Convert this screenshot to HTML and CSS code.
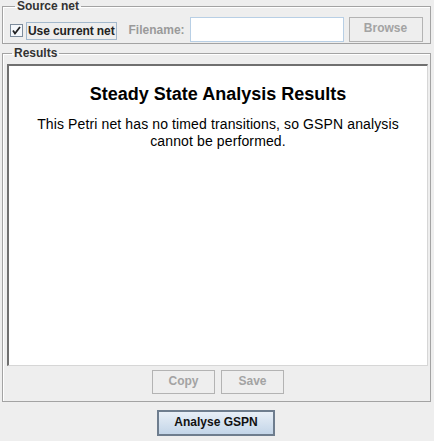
FILE: index.html
```html
<!DOCTYPE html>
<html>
<head>
<meta charset="utf-8">
<link rel="stylesheet" href="styles.css">
</head>
<body>
<fieldset class="group source">
  <legend class="group-title">Source net</legend>
  <div class="source-row">
    <span class="check">
      <svg width="13" height="13" viewBox="0 0 13 13">
        <rect x="0.5" y="0.5" width="12" height="12" fill="#f4f7fb" stroke="#7d8c9c"/>
        <path d="M3 6.5 L5 9.5 L10 3" fill="none" stroke="#222" stroke-width="1.8"/>
      </svg>
    </span>
    <span class="check-label">Use current net</span>
    <span class="field-label">Filename:</span>
    <span class="textfield"></span>
    <span class="btn btn-disabled browse">Browse</span>
  </div>
</fieldset>
<fieldset class="group results">
  <legend class="group-title">Results</legend>
  <div class="pane">
    <h1 class="pane-title">Steady State Analysis Results</h1>
    <p class="pane-text">This Petri net has no timed transitions, so GSPN analysis<br>cannot be performed.</p>
  </div>
  <div class="pane-actions">
    <span class="btn btn-disabled copy">Copy</span>
    <span class="btn btn-disabled save">Save</span>
  </div>
</fieldset>
<div class="footer">
  <span class="btn btn-primary">Analyse GSPN</span>
</div>
</body>
</html>
```

FILE: styles.css
```css
html, body {
  margin: 0;
  padding: 0;
}
body {
  width: 434px;
  height: 441px;
  background: #eeeeee;
  font-family: "Liberation Sans", Arial, sans-serif;
  overflow: hidden;
}
.group {
  margin: 0 3px 0 2px;
  border: 1px solid #a3a3a3;
  box-shadow: inset 1px 1px 0 #ffffff;
  min-width: 0;
}
.group-title {
  font-size: 12px;
  line-height: 12px;
  font-weight: bold;
  color: #333333;
  padding: 0 2px;
  margin-left: 5px;
  white-space: nowrap;
}
.source {
  padding: 5px 4px 1px 7px;
}
.source-row {
  display: flex;
  align-items: center;
  height: 25px;
  white-space: nowrap;
}
.source-row > * {
  flex-shrink: 0;
}
.check {
  width: 13px;
  height: 13px;
  display: flex;
  margin-top: 2px;
}
.check-label {
  margin-left: 3px;
  height: 16px;
  line-height: 16px;
  padding: 0 1px 0 1px;
  border: 1px solid #a3b8cc;
  font-size: 12px;
  font-weight: bold;
  letter-spacing: -0.1px;
  color: #222222;
  margin-top: 3px;
}
.field-label {
  margin-left: 12px;
  font-size: 12px;
  font-weight: bold;
  color: #9a9a9a;
}
.textfield {
  margin-left: 5px;
  width: 152px;
  height: 23px;
  background: #ffffff;
  border: 1px solid #b8cfe5;
}
.btn {
  display: flex;
  align-items: center;
  justify-content: center;
  box-sizing: border-box;
  font-size: 12px;
  font-weight: bold;
  white-space: nowrap;
}
.btn-disabled {
  border: 1px solid #b3b3b3;
  color: #a3a3a3;
  background: #eeeeee;
}
.browse {
  margin-left: 5px;
  width: 74px;
  height: 25px;
  padding-bottom: 3px;
}
.results {
  margin-top: 3px;
  padding: 5px 1px 7px 4px;
}
.pane {
  box-sizing: border-box;
  width: 421px;
  height: 302px;
  background: #ffffff;
  border-top: 2px solid #707070;
  border-left: 2px solid #707070;
  border-right: 1px solid #d6d6d6;
  border-bottom: 1px solid #d6d6d6;
  text-align: center;
  color: #000000;
}
.pane-title {
  margin: 18px 0 0;
  font-size: 18px;
  line-height: 21px;
  font-weight: bold;
}
.pane-text {
  margin: 11px 0 0;
  font-size: 14px;
  line-height: 17px;
  letter-spacing: 0.12px;
}
.pane-actions {
  display: flex;
  justify-content: center;
  gap: 6px;
  margin-top: 4px;
}
.copy, .save {
  width: 63px;
  height: 24px;
  padding-bottom: 2px;
}
.footer {
  display: flex;
  justify-content: center;
  margin-top: 8px;
  padding-right: 2px;
}
.btn-primary {
  width: 118px;
  height: 26px;
  border: 2px solid #6e7d8e;
  color: #111111;
  background: linear-gradient(#e8eff7, #c3d5e8);
  padding-bottom: 2px;
}
```
